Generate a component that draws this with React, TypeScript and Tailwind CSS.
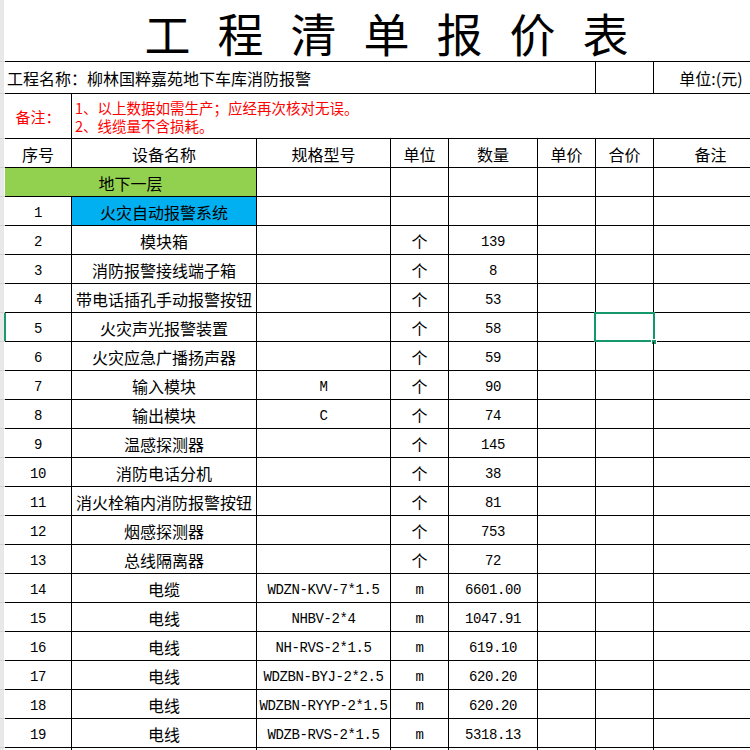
import React from 'react';

const G = 'grid grid-cols-[5px_67px_185px_134px_58px_89px_58px_58px_114px]';
const CJK = "font-['Noto_Sans_CJK_SC',sans-serif]";
const MONO = "font-['Liberation_Mono','Noto_Sans_CJK_SC',monospace] text-[14px] tracking-[-0.4px] pt-[3px]";
const ZH = "font-['Noto_Sans_CJK_SC',sans-serif] text-[16px] pt-[1px]";
const CELL = 'flex items-center justify-center border-r border-b border-black leading-[20px] whitespace-nowrap overflow-hidden';

type Item = { no: string; name: string; spec?: string; unit: string; qty: string };

// 设备清单
const items: Item[] = [
  { no: '2', name: '模块箱', unit: '个', qty: '139' },
  { no: '3', name: '消防报警接线端子箱', unit: '个', qty: '8' },
  { no: '4', name: '带电话插孔手动报警按钮', unit: '个', qty: '53' },
  { no: '5', name: '火灾声光报警装置', unit: '个', qty: '58' },
  { no: '6', name: '火灾应急广播扬声器', unit: '个', qty: '59' },
  { no: '7', name: '输入模块', spec: 'M', unit: '个', qty: '90' },
  { no: '8', name: '输出模块', spec: 'C', unit: '个', qty: '74' },
  { no: '9', name: '温感探测器', unit: '个', qty: '145' },
  { no: '10', name: '消防电话分机', unit: '个', qty: '38' },
  { no: '11', name: '消火栓箱内消防报警按钮', unit: '个', qty: '81' },
  { no: '12', name: '烟感探测器', unit: '个', qty: '753' },
  { no: '13', name: '总线隔离器', unit: '个', qty: '72' },
  { no: '14', name: '电缆', spec: 'WDZN-KVV-7*1.5', unit: 'm', qty: '6601.00' },
  { no: '15', name: '电线', spec: 'NHBV-2*4', unit: 'm', qty: '1047.91' },
  { no: '16', name: '电线', spec: 'NH-RVS-2*1.5', unit: 'm', qty: '619.10' },
  { no: '17', name: '电线', spec: 'WDZBN-BYJ-2*2.5', unit: 'm', qty: '620.20' },
  { no: '18', name: '电线', spec: 'WDZBN-RYYP-2*1.5', unit: 'm', qty: '620.20' },
  { no: '19', name: '电线', spec: 'WDZB-RVS-2*1.5', unit: 'm', qty: '5318.13' },
];

const Strip = ({ sel = false }: { sel?: boolean }) => (
  <div className="relative flex border-b border-[#d4d4d4]">
    <div className="flex-1 bg-[#e8e8e8]" />
    <div className="w-px bg-white" />
    {sel && <div className="absolute right-[-1px] top-0 h-full w-[2px] bg-[#1d9a6c]" />}
  </div>
);

const Row = ({ it }: { it: Item }) => {
  const sel = it.no === '5';
  return (
    <div className={`${G} h-[29px]`}>
      <Strip sel={sel} />
      <div className={`${CELL} ${MONO}`}>{it.no}</div>
      <div className={`${CELL} ${ZH}`}>{it.name}</div>
      <div className={`${CELL} ${MONO}`}>{it.spec ?? ''}</div>
      <div className={`${CELL} ${it.unit === 'm' ? MONO : ZH}`}>{it.unit}</div>
      <div className={`${CELL} ${MONO}`}>{it.qty}</div>
      <div className={CELL} />
      <div className={`${CELL} relative overflow-visible`}>
        {sel && (
          <>
            <div className="absolute -left-[2px] -top-[1px] h-[30px] w-[61px] border-2 border-[#13976b]" />
            <div className="absolute left-[55px] top-[26px] h-[6px] w-[6px] border border-white bg-[#13976b]" />
          </>
        )}
      </div>
      <div className={CELL} />
    </div>
  );
};

const EmptyCells = ({ n }: { n: number }) => (
  <>
    {Array.from({ length: n }).map((_, i) => (
      <div key={i} className={CELL} />
    ))}
  </>
);

export default function App() {
  const title = ['工', '程', '清', '单', '报', '价', '表'];
  const headers = ['序号', '设备名称', '规格型号', '单位', '数量', '单价', '合价', '备注'];

  return (
    <div className="h-[750px] w-[750px] overflow-hidden bg-white text-black">
      {/* 标题 */}
      <div className={`${G} h-[62px]`}>
        <Strip />
        <div className={`col-span-8 flex items-center justify-center gap-[27px] border-b border-black pt-[3px] ${CJK} text-[46px] leading-[58px]`}>
          {title.map((c) => (
            <span key={c}>{c}</span>
          ))}
        </div>
      </div>

      {/* 工程名称 */}
      <div className={`${G} h-[32px]`}>
        <Strip />
        <div className={`col-span-6 flex items-center border-r border-b border-black pl-[2px] ${CJK} text-[16px]`}>
          工程名称：柳林国粹嘉苑地下车库消防报警
        </div>
        <div className="border-r border-b border-black" />
        <div className={`flex items-center justify-center border-b border-black ${CJK} text-[16px]`}>
          单位:(元)
        </div>
      </div>

      {/* 备注 */}
      <div className={`${G} h-[45px]`}>
        <Strip />
        <div className={`flex items-center justify-center border-r border-b border-black pt-[3px] text-[#ff0000] ${CJK} text-[15px]`}>
          备注：
        </div>
        <div className={`col-span-7 flex flex-col justify-center border-b border-black pl-[3px] pt-[1px] text-[#ff0000] ${CJK} text-[14.5px] leading-[18px]`}>
          <span>1、以上数据如需生产；应经再次核对无误。</span>
          <span>2、线缆量不含损耗。</span>
        </div>
      </div>

      {/* 表头 */}
      <div className={`${G} h-[29px]`}>
        <Strip />
        {headers.map((h) => (
          <div key={h} className={`${CELL} ${ZH}`}>
            {h}
          </div>
        ))}
      </div>

      {/* 地下一层 */}
      <div className={`${G} h-[29px]`}>
        <Strip />
        <div className={`col-span-2 ${CELL} bg-[#92d050] ${ZH}`}>地下一层</div>
        <EmptyCells n={6} />
      </div>

      <div className={`${G} h-[29px]`}>
        <Strip />
        <div className={`${CELL} ${MONO}`}>1</div>
        <div className={`${CELL} bg-[#00b0f0] ${ZH}`}>火灾自动报警系统</div>
        <EmptyCells n={6} />
      </div>

      {items.map((it) => (
        <Row key={it.no} it={it} />
      ))}

      <div className={`${G} h-[29px]`}>
        <Strip />
        <EmptyCells n={8} />
      </div>
    </div>
  );
}
